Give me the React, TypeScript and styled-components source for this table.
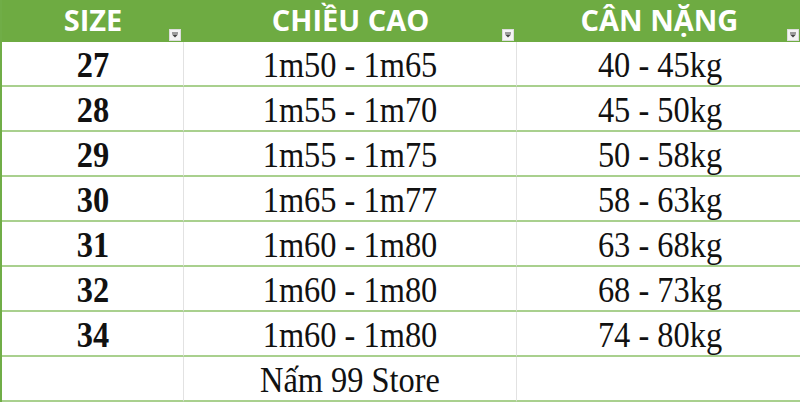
import { Fragment } from "react";
import styled, { createGlobalStyle } from "styled-components";

const GlobalStyle = createGlobalStyle`
  html, body {
    margin: 0;
    padding: 0;
    background: #ffffff;
  }
`;

const Table = styled.div`
  width: 800px;
  height: 402px;
  display: grid;
  grid-template-columns: 182px 333px 285px;
  grid-template-rows: 42px repeat(8, 45px);
  border-left: 2px solid #70ad47;
  box-sizing: border-box;
  overflow: hidden;
`;

const HeadCell = styled.div`
  position: relative;
  background: #6eab42;
  color: #ffffff;
  font-family: "Open Sans", sans-serif;
  font-weight: 700;
  font-size: 29px;
  display: flex;
  align-items: center;
  justify-content: center;
  padding-bottom: 4px;
  box-sizing: border-box;
`;

const Filter = styled.span`
  position: absolute;
  right: 3px;
  bottom: 1px;
  width: 12px;
  height: 12px;
  background: #f4f4f4;
  border: 1px solid #dcdcdc;
  box-sizing: border-box;
  display: flex;
  align-items: center;
  justify-content: center;
`;

const Cell = styled.div<{ $bold?: boolean; $divider?: boolean }>`
  display: flex;
  align-items: center;
  justify-content: center;
  border-bottom: 2px solid #a9d08e;
  border-right: ${(p) => (p.$divider ? "1px solid #e2e2e2" : "none")};
  box-sizing: border-box;
  font-family: "Liberation Serif", "DejaVu Serif", "Times New Roman", serif;
  font-size: 36px;
  font-weight: ${(p) => (p.$bold ? 700 : 400)};
  color: #111111;
  padding-top: 2px;
`;

const Text = styled.span`
  display: inline-block;
  font-family: "Liberation Serif", "DejaVu Serif", serif;
  transform: scaleX(0.9);
  white-space: nowrap;
`;

const FilterIcon = () => (
  <svg width="8" height="6" viewBox="0 0 8 6">
    <rect x="1" y="0.5" width="6" height="1" fill="#444" />
    <path d="M1 2.5 H7 L4 5.5 Z" fill="#444" />
  </svg>
);

const rows = [
  ["27", "1m50 - 1m65", "40 - 45kg"],
  ["28", "1m55 - 1m70", "45 - 50kg"],
  ["29", "1m55 - 1m75", "50 - 58kg"],
  ["30", "1m65 - 1m77", "58 - 63kg"],
  ["31", "1m60 - 1m80", "63 - 68kg"],
  ["32", "1m60 - 1m80", "68 - 73kg"],
  ["34", "1m60 - 1m80", "74 - 80kg"],
  ["", "Nấm 99 Store", ""],
];

const headers = ["SIZE", "CHIỀU CAO", "CÂN NẶNG"];

export default function App() {
  return (
    <>
      <GlobalStyle />
      <Table>
        {headers.map((h) => (
          <HeadCell key={h}>
            {h}
            <Filter>
              <FilterIcon />
            </Filter>
          </HeadCell>
        ))}
        {rows.map((r, i) => (
          <Fragment key={i}>
            <Cell $bold $divider>
              <Text>{r[0]}</Text>
            </Cell>
            <Cell $divider>
              <Text>{r[1]}</Text>
            </Cell>
            <Cell>
              <Text>{r[2]}</Text>
            </Cell>
          </Fragment>
        ))}
      </Table>
    </>
  );
}
